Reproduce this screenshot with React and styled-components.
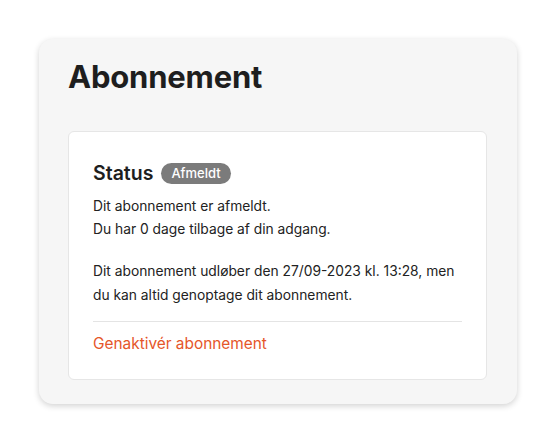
import React from "react";
import styled, { createGlobalStyle } from "styled-components";

const GlobalStyle = createGlobalStyle`
  html, body {
    margin: 0;
    background: #ffffff;
    font-family: "Inter", "Liberation Sans", sans-serif;
    color: #1f1f1f;
  }
`;

const Page = styled.div`
  padding: 39px;
`;

const Panel = styled.section`
  background: #f6f6f6;
  border-radius: 14px;
  box-shadow: 0 2px 6px rgba(0, 0, 0, 0.18);
  padding: 19px 30px 24px 29px;
`;

const Title = styled.h1`
  font-size: 31px;
  font-weight: 700;
  letter-spacing: -0.2px;
  margin: 0 0 36px;
  color: #1e1e1e;
`;

const Card = styled.div`
  background: #ffffff;
  border: 1px solid #e6e6e6;
  border-radius: 6px;
  padding: 29px 24px 26px 24px;
`;

const StatusRow = styled.div`
  display: flex;
  align-items: center;
  gap: 8px;
  margin-bottom: 10px;
`;

const Heading = styled.h2`
  font-size: 19.5px;
  font-weight: 600;
  margin: 0;
  color: #1e1e1e;
`;

const Badge = styled.span`
  background: #7b7b7b;
  color: #ffffff;
  font-size: 13px;
  font-weight: 500;
  border-radius: 999px;
  padding: 2px 10px;
  line-height: 17px;
`;

const Text = styled.p`
  font-size: 13.8px;
  line-height: ${(props) => props.lh || "23px"};
  margin: 0 0 ${(props) => props.mb || "0"};
  color: #222222;
`;

const Divider = styled.hr`
  border: none;
  border-top: 1px solid #e4e4e4;
  margin: 14px 0 11px;
`;

const Link = styled.a`
  color: #e5562a;
  font-size: 15.4px;
  text-decoration: none;
  cursor: pointer;
`;

export default function App() {
  return (
    <>
      <GlobalStyle />
      <Page>
        <Panel>
          <Title>Abonnement</Title>
          <Card>
            <StatusRow>
              <Heading>Status</Heading>
              <Badge>Afmeldt</Badge>
            </StatusRow>
            <Text>Dit abonnement er afmeldt.</Text>
            <Text mb="18px">Du har 0 dage tilbage af din adgang.</Text>
            <Text lh="24px">
              Dit abonnement udløber den 27/09-2023 kl. 13:28, men du kan altid
              genoptage dit abonnement.
            </Text>
            <Divider />
            <Link>Genaktivér abonnement</Link>
          </Card>
        </Panel>
      </Page>
    </>
  );
}
